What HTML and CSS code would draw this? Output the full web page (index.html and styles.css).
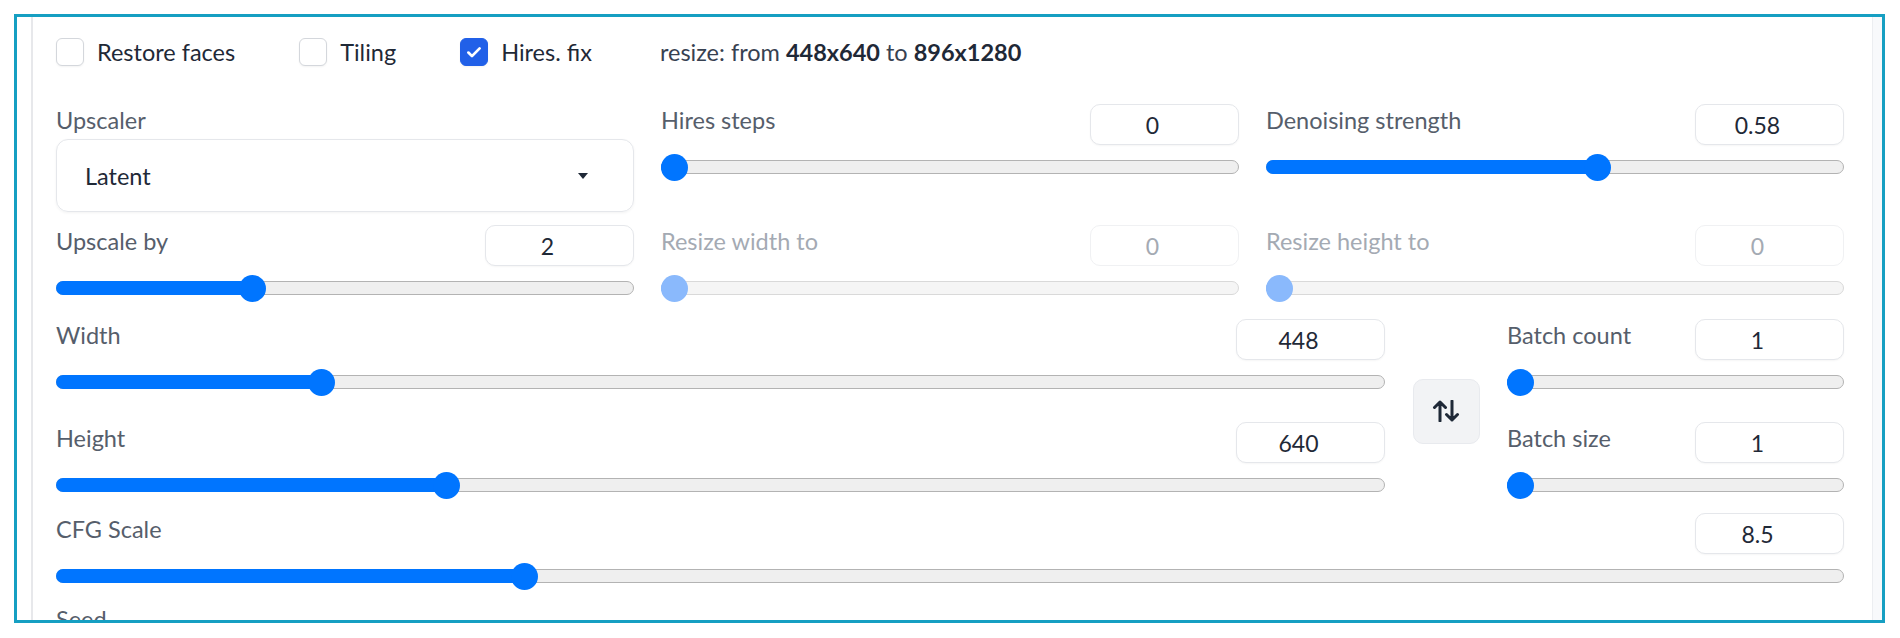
FILE: index.html
```html
<!DOCTYPE html>
<html>
<head>
    <meta charset="UTF-8" />
    <title>txt2img settings</title>
    <link rel="stylesheet" href="styles.css">
</head>
<body>
    <div class="frame">
        <div class="panel">
            <div class="checks">
                <label class="check"><span class="box"></span>Restore faces</label>
                <label class="check"><span class="box"></span>Tiling</label>
                <label class="check"><span class="box on"><svg viewBox="0 0 16 16" width="18" height="18"><path d="M3 8.5l3.2 3.2L13 4.8" fill="none" stroke="#fff" stroke-width="2.4" stroke-linecap="round" stroke-linejoin="round"/></svg></span>Hires. fix</label>
                <span class="resize-info">resize: from <b>448x640</b> to <b>896x1280</b></span>
            </div>

            <div class="row three first">
                <div class="field">
                    <div class="label">Upscaler</div>
                    <div class="select">
                        <span>Latent</span>
                        <svg class="caret" viewBox="0 0 10 6" width="10" height="6"><path d="M0 0h10L5 6z" fill="#1f2937"/></svg>
                    </div>
                </div>
                <div class="field">
                    <div class="head"><span class="label">Hires steps</span><input class="num" value="0"></div>
                    <div class="slider" style="--p:0"><div class="fill"></div><div class="knob"></div></div>
                </div>
                <div class="field">
                    <div class="head"><span class="label">Denoising strength</span><input class="num" value="0.58"></div>
                    <div class="slider" style="--p:0.58"><div class="fill"></div><div class="knob"></div></div>
                </div>
            </div>

            <div class="row three second">
                <div class="field">
                    <div class="head"><span class="label">Upscale by</span><input class="num" value="2"></div>
                    <div class="slider" style="--p:0.3333"><div class="fill"></div><div class="knob"></div></div>
                </div>
                <div class="field off">
                    <div class="head"><span class="label">Resize width to</span><input class="num" value="0" disabled></div>
                    <div class="slider" style="--p:0"><div class="fill"></div><div class="knob"></div></div>
                </div>
                <div class="field off">
                    <div class="head"><span class="label">Resize height to</span><input class="num" value="0" disabled></div>
                    <div class="slider" style="--p:0"><div class="fill"></div><div class="knob"></div></div>
                </div>
            </div>

            <div class="row dims">
                <div class="stack">
                    <div class="field">
                        <div class="head"><span class="label">Width</span><input class="num" value="448"></div>
                        <div class="slider" style="--p:0.1935"><div class="fill"></div><div class="knob"></div></div>
                    </div>
                    <div class="field">
                        <div class="head"><span class="label">Height</span><input class="num" value="640"></div>
                        <div class="slider" style="--p:0.2903"><div class="fill"></div><div class="knob"></div></div>
                    </div>
                </div>
                <button class="swap" title="Switch width/height">
                    <svg viewBox="0 0 28 22" width="28" height="22"><path d="M8 21V2M2.5 7.5L8 2l5.5 5.5M20 1v19M14.5 14.5L20 20l5.5-5.5" fill="none" stroke="#1f2937" stroke-width="3" stroke-linecap="round" stroke-linejoin="round"/></svg>
                </button>
                <div class="stack">
                    <div class="field">
                        <div class="head"><span class="label">Batch count</span><input class="num" value="1"></div>
                        <div class="slider" style="--p:0"><div class="fill"></div><div class="knob"></div></div>
                    </div>
                    <div class="field">
                        <div class="head"><span class="label">Batch size</span><input class="num" value="1"></div>
                        <div class="slider" style="--p:0"><div class="fill"></div><div class="knob"></div></div>
                    </div>
                </div>
            </div>

            <div class="row cfg">
                <div class="field">
                    <div class="head"><span class="label">CFG Scale</span><input class="num" value="8.5"></div>
                    <div class="slider" style="--p:0.2586"><div class="fill"></div><div class="knob"></div></div>
                </div>
            </div>

            <div class="row seed">
                <div class="label">Seed</div>
            </div>
        </div>
    </div>
</body>
</html>
```

FILE: styles.css
```css
body {
    margin: 0;
    background: #fff;
    font-family: Lato, "Noto Sans", sans-serif;
}

.frame {
    margin: 14px 0 0 14px;
    width: 1865px;
    height: 603px;
    border: 3px solid #169fc2;
    overflow: hidden;
    background: linear-gradient(to right, #fff 1800px, #f8f9fb 1800px);
}

.panel {
    margin-left: 14px;
    width: 1842px;
    height: 100%;
    box-sizing: border-box;
    padding: 21px 28px 0 23px;
    background: #fff;
    border-left: 2px solid #e7e8eb;
    border-right: 1px solid #eceef1;
}

/* checkbox row */
.checks {
    display: flex;
    align-items: center;
    height: 28px;
}

.check {
    display: flex;
    align-items: center;
    gap: 13px;
    margin-right: 64px;
    font-size: 23.5px;
    color: #1f2937;
}

.box {
    width: 28px;
    height: 28px;
    box-sizing: border-box;
    border: 1px solid #d4d7dc;
    border-radius: 6px;
    background: #fff;
    box-shadow: 0 1px 2px rgba(0, 0, 0, 0.05);
    display: flex;
    align-items: center;
    justify-content: center;
}

.box.on {
    background: #2160e8;
    border-color: #2160e8;
}

.resize-info {
    margin-left: 4px;
    font-size: 23.5px;
    color: #374151;
}

.resize-info b {
    color: #1f2937;
}

/* rows */
.row {
    display: grid;
    grid-template-columns: repeat(3, 1fr);
    column-gap: 27px;
}

.row.first { margin-top: 38px; }
.row.second { margin-top: 13px; }
.row.dims {
    margin-top: 17px;
    grid-template-columns: 1fr 122px 337px;
    column-gap: 0;
}
.row.cfg {
    margin-top: 14px;
    grid-template-columns: 1fr;
}
.row.seed {
    margin-top: 13px;
    grid-template-columns: 1fr;
}

.stack {
    display: flex;
    flex-direction: column;
    gap: 26px;
}

.label {
    font-size: 23.5px;
    line-height: 32px;
    color: #565e6b;
}

.field.off .label {
    color: #a4aab3;
}

.head {
    display: flex;
    justify-content: space-between;
    align-items: flex-start;
    height: 41px;
}

.num {
    width: 149px;
    height: 41px;
    box-sizing: border-box;
    border: 1px solid #e5e7eb;
    border-radius: 10px;
    background: #fff;
    box-shadow: 0 1px 2px rgba(0, 0, 0, 0.04);
    font-family: inherit;
    font-size: 23px;
    color: #1f2937;
    text-align: center;
    padding: 0 24px 0 0;
    outline: none;
}

.num:disabled {
    border-color: #f0f1f3;
    color: #a4aab3;
    box-shadow: none;
}

/* dropdown */
.select {
    margin-top: 3px;
    height: 73px;
    box-sizing: border-box;
    border: 1px solid #e5e7eb;
    border-radius: 12px;
    box-shadow: 0 1px 3px rgba(0, 0, 0, 0.05);
    display: flex;
    align-items: center;
    justify-content: space-between;
    padding: 0 45px 0 28px;
    font-size: 23.5px;
    color: #1f2937;
}

/* sliders */
.slider {
    position: relative;
    height: 14px;
    margin: 15px 0 7px;
    box-sizing: border-box;
    border: 1px solid #b3b3b3;
    border-radius: 7px;
    background: #efefef;
}

.fill {
    position: absolute;
    left: -1px;
    top: -1px;
    bottom: -1px;
    width: calc(var(--p) * (100% - 27px) + 15px);
    border-radius: 7px;
    background: #0075ff;
}

.knob {
    position: absolute;
    top: 50%;
    left: calc(var(--p) * (100% - 27px) - 1px);
    width: 27px;
    height: 27px;
    margin-top: -13.5px;
    border-radius: 50%;
    background: #0075ff;
}

.field.off .slider {
    border-color: #d9d9d9;
    background: #f5f5f5;
}

.field.off .fill,
.field.off .knob {
    background: #8ab9fc;
}

/* swap button */
.swap {
    align-self: center;
    justify-self: center;
    width: 67px;
    height: 65px;
    margin-top: 4px;
    border: 1px solid #e8eaee;
    border-radius: 10px;
    background: #f2f3f5;
    display: flex;
    align-items: center;
    justify-content: center;
    padding: 0;
}
```
